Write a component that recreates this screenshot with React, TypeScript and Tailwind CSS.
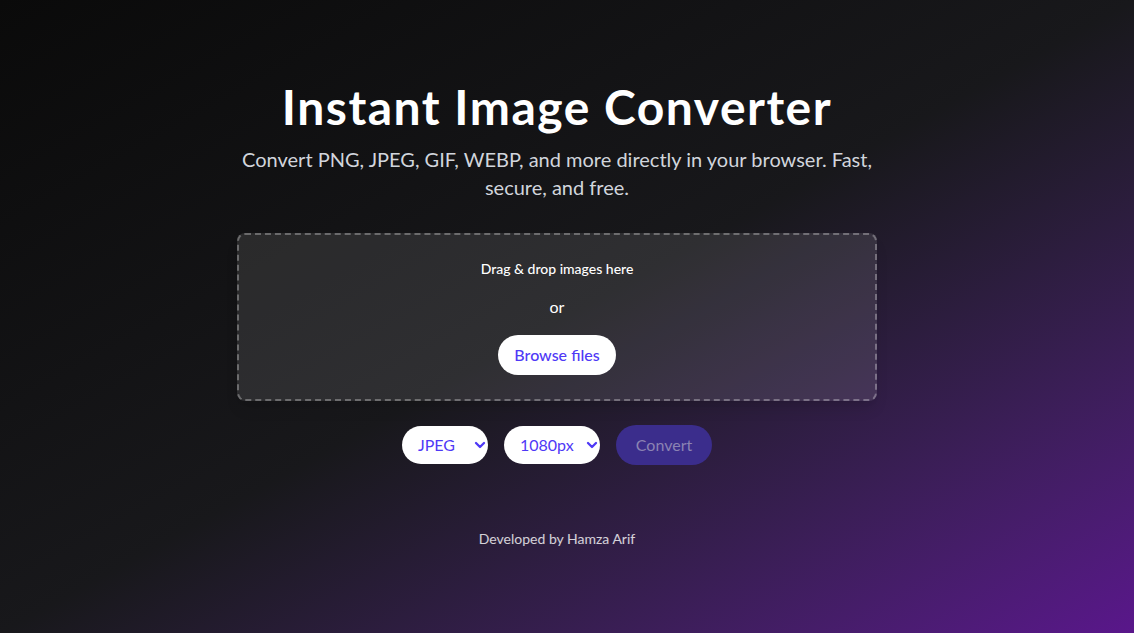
import { ChevronDown } from 'lucide-react'

const font = { fontFamily: '"Segoe UI", Lato, "Noto Sans", sans-serif' }

function Select({ value, options, width }: { value: string; options: string[]; width: string }) {
  return (
    <div className={`relative ${width}`}>
      <select
        defaultValue={value}
        className="w-full h-[38px] appearance-none rounded-full bg-white pl-4 pr-5 text-base text-indigo-600 outline-none"
      >
        {options.map((o) => (
          <option key={o}>{o}</option>
        ))}
      </select>
      <ChevronDown
        strokeWidth={3.5}
        className="pointer-events-none absolute right-0 top-1/2 size-4 -translate-y-1/2 text-indigo-600"
      />
    </div>
  )
}

export default function App() {
  return (
    <main
      style={font}
      className="min-h-screen w-full flex flex-col items-center justify-center pr-5 pb-[2px] bg-linear-to-br from-neutral-950 via-zinc-900 to-purple-900 text-white"
    >
      <h1 className="text-5xl font-bold leading-none tracking-[1.5px]">Instant Image Converter</h1>
      <p className="mt-[14px] max-w-[640px] text-center text-xl leading-7 text-gray-300">
        Convert PNG, JPEG, GIF, WEBP, and more directly in your browser. Fast, secure, and free.
      </p>

      <div className="mt-8 w-[640px] flex flex-col items-center gap-4 rounded-lg border-2 border-dashed border-white/30 bg-white/10 p-6 shadow-lg">
        <p className="text-sm font-medium leading-5">Drag &amp; drop images here</p>
        <p className="text-base leading-6">or</p>
        <button className="rounded-full bg-white px-4 py-2 text-base font-medium leading-6 text-indigo-600">
          Browse files
        </button>
      </div>

      <div className="mt-6 flex items-center gap-4">
        <Select value="JPEG" options={['JPEG', 'PNG', 'WEBP', 'GIF']} width="w-[86px]" />
        <Select value="1080px" options={['720px', '1080px', '1440px', '2160px']} width="w-[96px]" />
        <button
          disabled
          className="h-10 w-[96px] rounded-full bg-[#3b2d8c] text-base text-[#8b83b3]"
        >
          Convert
        </button>
      </div>

      <footer className="mt-16 text-sm leading-5 text-white/80">Developed by Hamza Arif</footer>
    </main>
  )
}
